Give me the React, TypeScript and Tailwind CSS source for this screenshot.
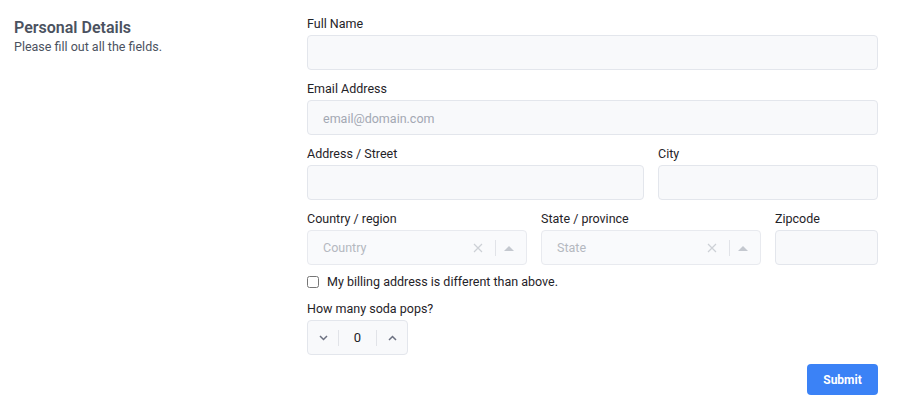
import { useState } from "react"

const font = { fontFamily: 'Roboto, "Noto Sans", sans-serif' }

const Label = ({ children }: { children: React.ReactNode }) => (
  <label className="block text-[12.5px] leading-[18px] pt-px text-[#1f2328] mb-[2px]">{children}</label>
)

const TextInput = ({ placeholder }: { placeholder?: string }) => (
  <input
    className="w-full h-[35px] rounded-[4px] border border-[#e3e6ec] bg-[#f8f9fb] px-[15px] pt-[2px] text-[12.5px] text-[#1f2328] placeholder:text-[#a3a8b3] outline-none"
    placeholder={placeholder}
  />
)

const SelectBox = ({ placeholder }: { placeholder: string }) => (
  <div className="flex items-center h-[35px] rounded-[4px] border border-[#e8eaef] bg-[#f9fafc] pl-[15px]">
    <span className="flex-1 pt-[2px] text-[12.5px] text-[#b4b8c0]">{placeholder}</span>
    <svg width="10" height="10" viewBox="0 0 10 10" className="mr-[12px]">
      <path d="M1 1L9 9M9 1L1 9" stroke="#cdd0d6" strokeWidth="1.2" />
    </svg>
    <span className="w-px h-[16px] bg-[#e1e3e8]" />
    <svg width="10" height="6" viewBox="0 0 10 6" className="ml-[8px] mr-[12px]">
      <path d="M0 6L5 1L10 6Z" fill="#c4c8cf" />
    </svg>
  </div>
)

export default function App() {
  const [count, setCount] = useState(0)

  return (
    <div className="flex w-[898px] h-[407px] bg-white px-[14px] pr-[20px]" style={font}>
      <div className="w-[293px] pt-[18px]">
        <h2 className="text-[16px] leading-[20px] font-semibold text-[#4b5260]">Personal Details</h2>
        <p className="text-[12.5px] leading-[17px] text-[#4b5260]">Please fill out all the fields.</p>
      </div>

      <form className="flex-1 flex flex-col gap-[9px] pt-[14px]" onSubmit={(e) => e.preventDefault()}>
        <div>
          <Label>Full Name</Label>
          <TextInput />
        </div>
        <div>
          <Label>Email Address</Label>
          <TextInput placeholder="email@domain.com" />
        </div>
        <div className="grid grid-cols-5 gap-x-[14px]">
          <div className="col-span-3">
            <Label>Address / Street</Label>
            <TextInput />
          </div>
          <div className="col-span-2">
            <Label>City</Label>
            <TextInput />
          </div>
        </div>
        <div className="grid grid-cols-5 gap-x-[14px]">
          <div className="col-span-2">
            <Label>Country / region</Label>
            <SelectBox placeholder="Country" />
          </div>
          <div className="col-span-2">
            <Label>State / province</Label>
            <SelectBox placeholder="State" />
          </div>
          <div>
            <Label>Zipcode</Label>
            <TextInput />
          </div>
        </div>
        <div className="flex items-center h-[16px]">
          <input type="checkbox" className="w-[12px] h-[12px] m-0 accent-[#3b82f6]" />
          <span className="ml-[8px] text-[12.5px] text-[#1f2328]">My billing address is different than above.</span>
        </div>
        <div>
          <Label>How many soda pops?</Label>
          <div className="flex items-center w-[101px] h-[35px] rounded-[4px] border border-[#e3e6ec] bg-[#f8f9fb]">
            <button type="button" className="w-[30px] flex justify-center" onClick={() => setCount(Math.max(0, count - 1))}>
              <svg width="9" height="6" viewBox="0 0 9 6">
                <path d="M1 1L4.5 4.5L8 1" stroke="#6b7080" strokeWidth="1.5" fill="none" />
              </svg>
            </button>
            <span className="w-px h-[16px] bg-[#e1e3e8]" />
            <span className="flex-1 text-center pt-px text-[13px] text-[#1f2328]">{count}</span>
            <span className="w-px h-[16px] bg-[#e1e3e8]" />
            <button type="button" className="w-[30px] flex justify-center" onClick={() => setCount(count + 1)}>
              <svg width="9" height="6" viewBox="0 0 9 6">
                <path d="M1 5L4.5 1.5L8 5" stroke="#6b7080" strokeWidth="1.5" fill="none" />
              </svg>
            </button>
          </div>
        </div>
        <div className="flex justify-end">
          <button type="submit" className="h-[31px] w-[71px] rounded-[4px] bg-[#3b82f6] text-[12px] font-bold text-white">
            Submit
          </button>
        </div>
      </form>
    </div>
  )
}
